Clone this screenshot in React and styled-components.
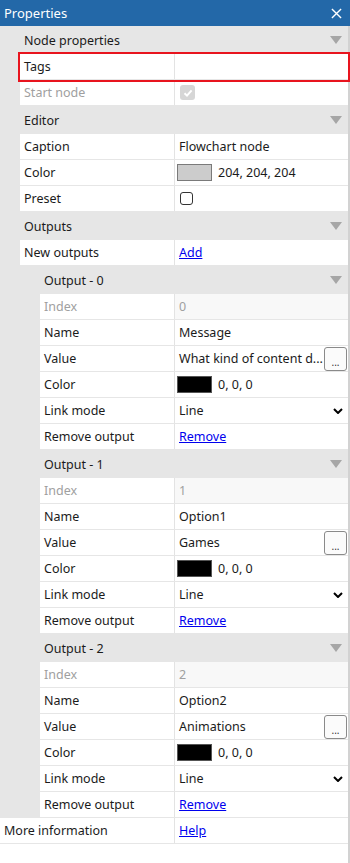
import React from "react";
import styled, { createGlobalStyle } from "styled-components";

const GlobalStyle = createGlobalStyle`
  html, body {
    margin: 0;
    padding: 0;
    background: #ffffff;
  }
  body {
    font-family: "Noto Sans", "Open Sans", sans-serif;
    font-size: 12.5px;
    color: #1b1b1b;
  }
`;

const outputs = [
  { name: "Message", value: "What kind of content d...", },
  { name: "Option1", value: "Games" },
  { name: "Option2", value: "Animations" },
];

const App = () => {
  return (
    <Window>
      <GlobalStyle />
      <TitleBar>
        <Title>Properties</Title>
        <CloseIcon viewBox="0 0 12 12">
          <path d="M1 1 L11 11 M11 1 L1 11" />
        </CloseIcon>
      </TitleBar>
      <Body>
        <Category $indent={20}>
          <CategoryHeader>
            Node properties
            <Arrow />
          </CategoryHeader>
          <Row $indent={20} $highlight>
            <Label>Tags</Label>
            <Value />
          </Row>
          <Row $indent={20}>
            <Label $disabled>Start node</Label>
            <Value>
              <CheckBox $checked $disabled>
                <svg viewBox="0 0 12 12">
                  <path d="M2.5 6.2 L5 8.6 L9.6 3.4" />
                </svg>
              </CheckBox>
            </Value>
          </Row>

          <CategoryHeader>
            Editor
            <Arrow />
          </CategoryHeader>
          <Row $indent={20}>
            <Label>Caption</Label>
            <Value>Flowchart node</Value>
          </Row>
          <Row $indent={20}>
            <Label>Color</Label>
            <Value>
              <Swatch $color="#cccccc" $border="#7a7a7a" />
              204, 204, 204
            </Value>
          </Row>
          <Row $indent={20}>
            <Label>Preset</Label>
            <Value>
              <CheckBox />
            </Value>
          </Row>

          <CategoryHeader>
            Outputs
            <Arrow />
          </CategoryHeader>
          <Row $indent={20}>
            <Label>New outputs</Label>
            <Value>
              <LinkText>Add</LinkText>
            </Value>
          </Row>

          <Category $indent={20}>
            {outputs.map((o, i) => (
              <React.Fragment key={i}>
                <CategoryHeader>
                  Output - {i}
                  <Arrow />
                </CategoryHeader>
                <Row $indent={40}>
                  <Label $disabled>Index</Label>
                  <Value $disabled>{i}</Value>
                </Row>
                <Row $indent={40}>
                  <Label>Name</Label>
                  <Value>{o.name}</Value>
                </Row>
                <Row $indent={40}>
                  <Label>Value</Label>
                  <Value>
                    <ValueText>{o.value}</ValueText>
                    <DotsButton>...</DotsButton>
                  </Value>
                </Row>
                <Row $indent={40}>
                  <Label>Color</Label>
                  <Value>
                    <Swatch $color="#000000" $border="#555555" />
                    0, 0, 0
                  </Value>
                </Row>
                <Row $indent={40}>
                  <Label>Link mode</Label>
                  <Value>
                    <ValueText>Line</ValueText>
                    <Chevron viewBox="0 0 10 6">
                      <path d="M1 1 L5 5 L9 1" />
                    </Chevron>
                  </Value>
                </Row>
                <Row $indent={40}>
                  <Label>Remove output</Label>
                  <Value>
                    <LinkText>Remove</LinkText>
                  </Value>
                </Row>
              </React.Fragment>
            ))}
          </Category>
        </Category>

        <Row $indent={0}>
          <Label>More information</Label>
          <Value>
            <LinkText>Help</LinkText>
          </Value>
        </Row>
      </Body>
    </Window>
  );
};

export default App;

const Window = styled.div`
  width: 350px;
  height: 863px;
  display: flex;
  flex-direction: column;
  background: #ffffff;
`;

const TitleBar = styled.div`
  height: 26px;
  flex-shrink: 0;
  background: #2368a8;
  display: flex;
  align-items: center;
  justify-content: space-between;
  padding: 0 8px 0 4px;
`;

const Title = styled.span`
  color: #ffffff;
  font-size: 13px;
`;

const CloseIcon = styled.svg`
  width: 11px;
  height: 11px;
  stroke: #ffffff;
  stroke-width: 1.5;
  fill: none;
`;

const Body = styled.div`
  flex: 1;
  width: 348px;
  border-right: 2px solid #d2d2d2;
`;

const Category = styled.div`
  background: #e6e6e6;
  padding-left: ${(p) => p.$indent}px;
`;

const CategoryHeader = styled.div`
  height: 28px;
  display: flex;
  align-items: center;
  justify-content: space-between;
  padding: 0 6px 0 4px;
  color: #1b1b1b;
`;

const Arrow = styled.span`
  width: 0;
  height: 0;
  border-left: 6.5px solid transparent;
  border-right: 6.5px solid transparent;
  border-top: 8px solid #a6a6a6;
`;

const Row = styled.div`
  display: grid;
  grid-template-columns: ${(p) => 175 - p.$indent}px 1fr;
  height: 26px;
  box-sizing: border-box;
  background: #ffffff;
  border-bottom: 1px solid #e6e6e6;
  outline: ${(p) => (p.$highlight ? "2px solid #e8141e" : "none")};
  position: ${(p) => (p.$highlight ? "relative" : "static")};
`;

const Label = styled.div`
  display: flex;
  align-items: center;
  padding-left: 4px;
  border-right: 1px solid #e3e3e3;
  color: ${(p) => (p.$disabled ? "#a0a0a0" : "#1b1b1b")};
  white-space: nowrap;
`;

const Value = styled.div`
  display: flex;
  align-items: center;
  padding: 0 1px 0 4px;
  min-width: 0;
  background: ${(p) => (p.$disabled ? "#f8f8f8" : "#ffffff")};
  color: ${(p) => (p.$disabled ? "#a0a0a0" : "#1b1b1b")};
  white-space: nowrap;
`;

const ValueText = styled.span`
  flex: 1;
  min-width: 0;
  margin-right: 3px;
`;

const Swatch = styled.span`
  width: 33px;
  height: 15px;
  background: ${(p) => p.$color};
  border: 1px solid ${(p) => p.$border};
  margin: 0 6px 0 -2px;
`;

const CheckBox = styled.span`
  width: ${(p) => (p.$disabled ? 15 : 13)}px;
  height: ${(p) => (p.$disabled ? 15 : 13)}px;
  box-sizing: border-box;
  border-radius: 3px;
  margin-left: 1px;
  background: ${(p) => (p.$disabled ? "#d6d6d6" : "#ffffff")};
  border: ${(p) => (p.$disabled ? "none" : "1px solid #333333")};
  display: flex;
  align-items: center;
  justify-content: center;

  svg {
    width: 12px;
    height: 12px;
    fill: none;
    stroke: #ffffff;
    stroke-width: 2;
  }
`;

const DotsButton = styled.span`
  flex-shrink: 0;
  width: 23px;
  height: 24px;
  box-sizing: border-box;
  border: 1px solid #8a8a8a;
  border-radius: 3px;
  background: #fbfbfb;
  display: flex;
  align-items: flex-end;
  justify-content: center;
  font-size: 10px;
  line-height: 16px;
  color: #333333;
`;

const Chevron = styled.svg`
  width: 10px;
  height: 6px;
  margin-right: 4px;
  fill: none;
  stroke: #000000;
  stroke-width: 2;
`;

const LinkText = styled.a`
  color: #0000ee;
  text-decoration: underline;
  cursor: pointer;
`;
